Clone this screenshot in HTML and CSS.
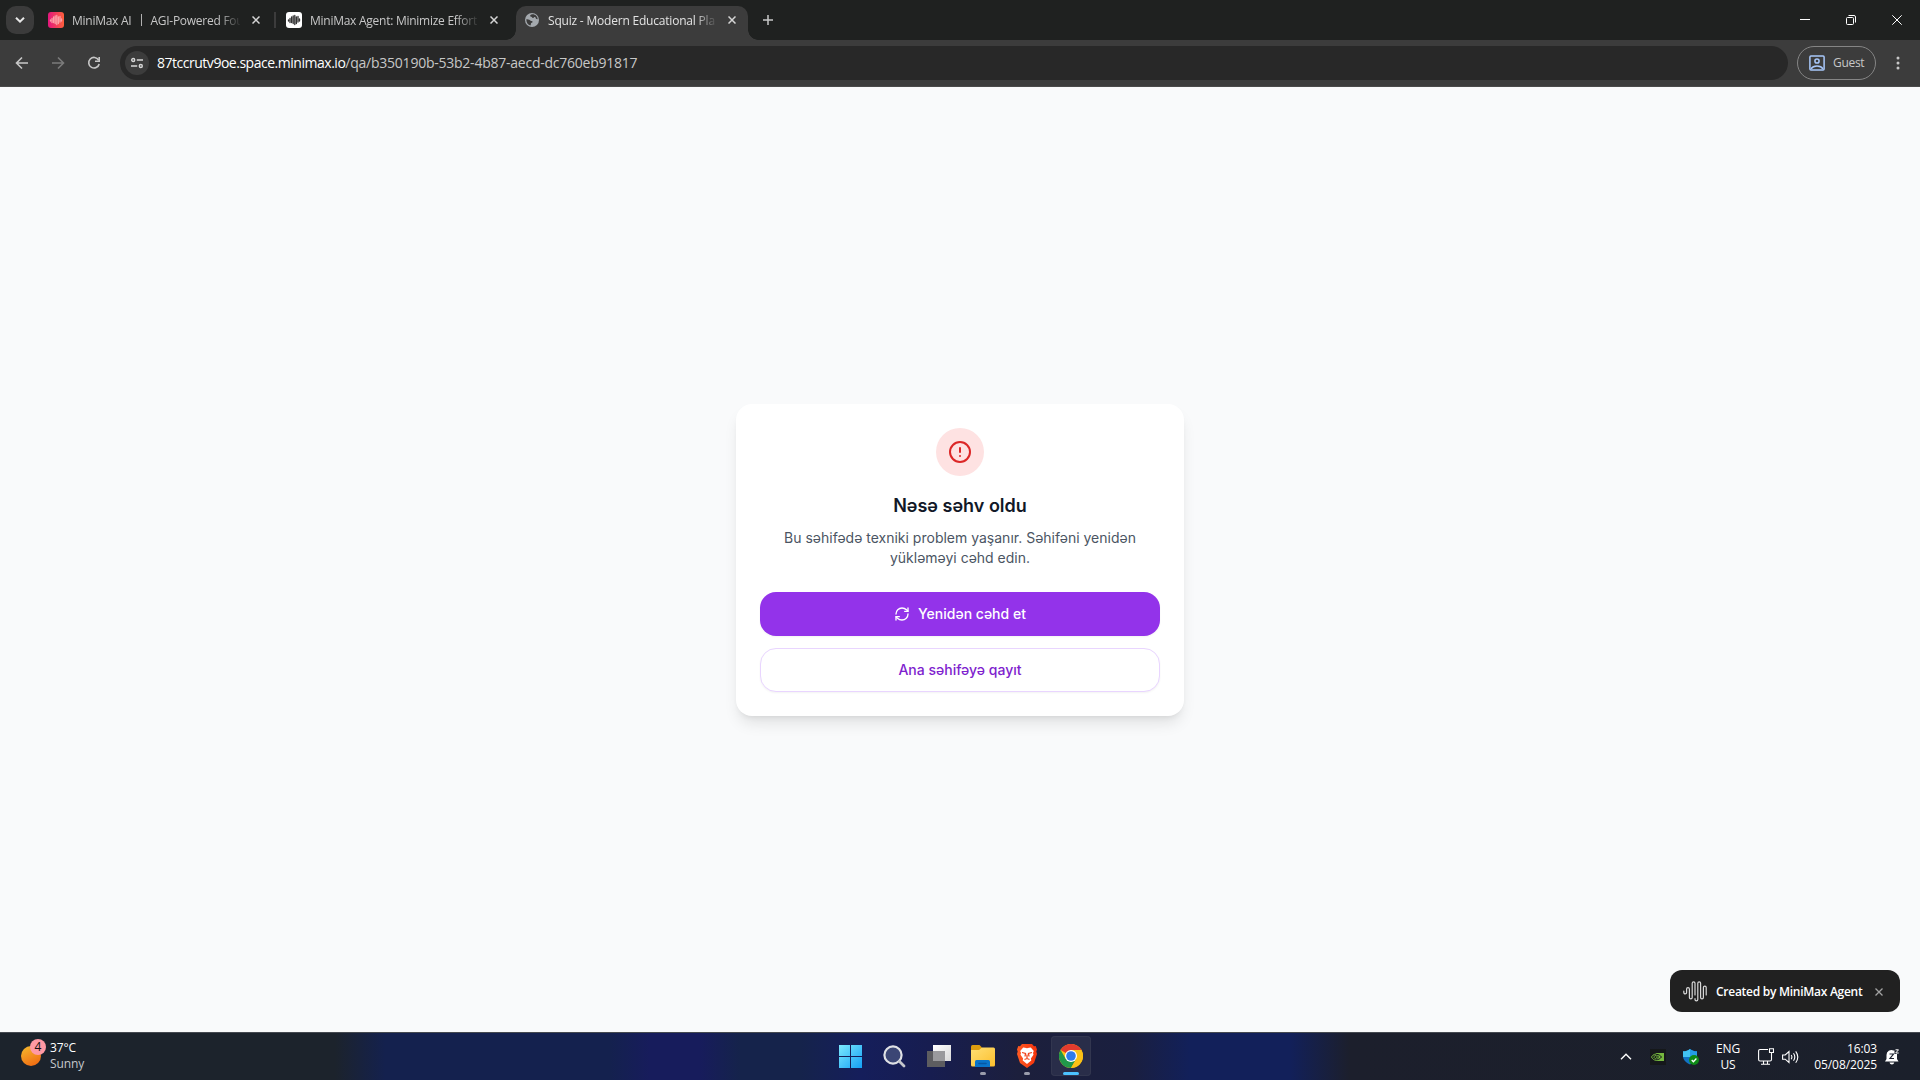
FILE: index.html
```html
<!DOCTYPE html>
<html lang="az">
<head>
<meta charset="utf-8">
<title>Squiz - Modern Educational Platform</title>
<link rel="stylesheet" href="styles.css">
</head>
<body>
<div class="screen">
  <header class="tabstrip">
    <button class="tab-search" aria-label="Search tabs"><svg width="10" height="6" viewBox="0 0 10 6" fill="none" stroke="#e8e8e8" stroke-width="2"><path d="M1 .8 5 4.600 9 .8"/></svg></button>
    <div class="tab first">
      <svg class="favicon" width="16" height="16" viewBox="0 0 16 16"><defs><linearGradient id="mm" x1="0" x2="1"><stop offset="0" stop-color="#e2167e"/><stop offset="1" stop-color="#fe603c"/></linearGradient></defs><rect width="16" height="16" rx="3" fill="url(#mm)"/><path d="M2.500 8v1M4 6.500v4M5.600 5v5.500M7.200 4v7.500M8.800 3.500v9M10.400 5v6.500M12 4.500v5.500M13.500 7v2" stroke="#fb9fa6" stroke-width="1.300" stroke-linecap="round"/></svg>
      <span class="tab-title"><span>MiniMax AI</span><span class="bar"></span><span>AGI-Powered Fou</span></span>
      <svg class="close" width="8" height="8" viewBox="0 0 8 8"><path d="M.5.5l7 7M7.500.5l-7 7"/></svg>
    </div>
    <span class="tab-sep"></span>
    <div class="tab second">
      <svg class="favicon" width="16" height="16" viewBox="0 0 16 16"><rect width="16" height="16" rx="3" fill="#fff"/><path d="M2.500 8v1M4 6.500v4M5.600 5v5.500M7.200 4v7.500M8.800 3.500v9M10.400 5v6.500M12 4.500v5.500M13.500 7v2" stroke="#333" stroke-width="1.300" stroke-linecap="round"/></svg>
      <span class="tab-title"><span>MiniMax Agent: Minimize Effort</span></span>
      <svg class="close" width="8" height="8" viewBox="0 0 8 8"><path d="M.5.5l7 7M7.500.5l-7 7"/></svg>
    </div>
    <div class="tab active">
      <svg class="globe" width="14" height="14" viewBox="0 0 14 14"><circle cx="7" cy="7" r="7" fill="#a4a9ae"/><path d="M7.500 1.300c-2 .2-2.500 1-2.300 2 .2.700 1.800.3 2 1.200.2.800 1.300.8 1.600 0 .3-.6 1-.6 1.500-.2.700.6.300 1.600 1.200 1.700l1.200.2C12.600 3.600 10.500 1.300 7.500 1.300zM1.300 6.300c.8 0 3 .1 4 1.100.9.900 2.200.3 2.300 1.400 0 1.200-1.700.7-1.700 2 0 .7-.2 1.400-.5 1.700C3 12 1.200 9.700 1.300 6.300z" fill="#3c3c3c"/></svg>
      <span class="tab-title"><span>Squiz - Modern Educational Pla</span></span>
      <svg class="close" width="8" height="8" viewBox="0 0 8 8"><path d="M.5.5l7 7M7.500.5l-7 7"/></svg>
    </div>
    <svg class="plus" width="10" height="10" viewBox="0 0 10 10"><path d="M5 0v10M0 5h10" stroke="#c7c7c7" stroke-width="1.500"/></svg>
    <div class="window-controls">
      <svg width="10" height="10" viewBox="0 0 10 10"><path d="M0 4.500h10"/></svg>
      <svg width="10" height="10" viewBox="0 0 10 10"><rect x=".5" y="2.500" width="7" height="7" rx="1"/><path d="M2.500.5H8A1.500 1.500 0 0 1 9.500 2v5.500"/></svg>
      <svg width="10" height="10" viewBox="0 0 10 10"><path d="M.3.3l9.400 9.400M9.700.3.3 9.700"/></svg>
    </div>
  </header>
  <nav class="toolbar">
    <svg class="nav-icon" width="16" height="16" viewBox="0 0 16 16"><path d="M14 8H3M8 2.500 2.500 8 8 13.500"/></svg>
    <svg class="nav-icon off" width="16" height="16" viewBox="0 0 16 16"><path d="M2 8h11M8 2.500 13.500 8 8 13.500"/></svg>
    <svg class="nav-icon" width="16" height="16" viewBox="0 0 16 16"><path d="M12.600 5A5.300 5.300 0 1 0 13.200 9"/><path d="M13.200 2v4.200H9"/></svg>
    <div class="omnibox">
      <span class="site-info"><svg width="12" height="12" viewBox="0 0 12 12" fill="none" stroke="#d6d6d6" stroke-width="1.400"><circle cx="2.200" cy="3" r="1.500"/><path d="M5.800 3H12M0 9h6.200"/><circle cx="9.800" cy="9" r="1.500"/></svg></span>
      <span class="url"><span class="host">87tccrutv9oe.space.minimax.io</span><span class="path">/qa/b350190b-53b2-4b87-aecd-dc760eb91817</span></span>
    </div>
    <button class="guest"><svg width="16" height="16" viewBox="0 0 16 16" fill="none" stroke="#a8c7fa" stroke-width="1.500"><rect x=".9" y=".9" width="14.200" height="14.200" rx="1"/><circle cx="8" cy="6" r="2.100"/><path d="M2 13.800c1.200-1.900 3.400-2.900 6-2.900s4.800 1 6 2.900"/></svg><span>Guest</span></button>
    <svg class="dots" width="4" height="14" viewBox="0 0 4 14" fill="#c7c7c7"><circle cx="2" cy="2" r="1.500"/><circle cx="2" cy="7" r="1.500"/><circle cx="2" cy="12" r="1.500"/></svg>
  </nav>
  <main class="page">
    <section class="card">
      <div class="alert-icon"><svg width="24" height="24" viewBox="0 0 24 24" fill="none" stroke="#dc2626" stroke-width="2" stroke-linecap="round"><circle cx="12" cy="12" r="10"/><path d="M12 8v4M12 16h.01"/></svg></div>
      <h1>Nəsə səhv oldu</h1>
      <p>Bu səhifədə texniki problem yaşanır. Səhifəni yenidən yükləməyi cəhd edin.</p>
      <button class="btn primary"><svg width="16" height="16" viewBox="0 0 24 24" fill="none" stroke="currentColor" stroke-width="2" stroke-linecap="round" stroke-linejoin="round"><path d="M3 12a9 9 0 0 1 9-9 9.750 9.750 0 0 1 6.740 2.740L21 8"/><path d="M21 3v5h-5"/><path d="M21 12a9 9 0 0 1-9 9 9.750 9.750 0 0 1-6.740-2.740L3 16"/><path d="M8 16H3v5"/></svg><span>Yenidən cəhd et</span></button>
      <button class="btn outline">Ana səhifəyə qayıt</button>
    </section>
    <aside class="badge">
      <svg width="25" height="21" viewBox="0 0 25 21" fill="none" stroke="#d8d8d8" stroke-width="1.200" stroke-linecap="round"><path d="M.8 10v1.500a1.400 1.400 0 0 0 2.800 0V8a1.400 1.400 0 0 1 2.800 0v8.500a1.400 1.400 0 0 0 2.800 0V2.200a1.400 1.400 0 0 1 2.800 0V14M12 17.500v1a1.400 1.400 0 0 0 2.800 0V2.200a1.400 1.400 0 0 1 2.800 0v14.300a1.400 1.400 0 0 0 2.800 0V6.500a1.400 1.400 0 0 1 2.800 0v7.500"/></svg>
      <span class="credit">Created by MiniMax Agent</span>
      <svg class="dismiss" width="8" height="8" viewBox="0 0 8 8"><path d="M.5.5l7 7M7.500.5l-7 7" stroke="#a3a3a3" stroke-width="1.300"/></svg>
    </aside>
  </main>
  <footer class="taskbar">
    <div class="weather">
      <svg width="26" height="28" viewBox="0 0 26 28"><defs><linearGradient id="sun" x1=".2" y1="0" x2=".7" y2="1"><stop offset="0" stop-color="#f5b62c"/><stop offset="1" stop-color="#f06a12"/></linearGradient></defs><circle cx="11" cy="17" r="10" fill="url(#sun)"/><circle cx="18" cy="8" r="8" fill="#ff99a4"/><text x="18" y="12" text-anchor="middle" class="count">4</text></svg>
      <div class="weather-text"><span>37°C</span><span class="cond">Sunny</span></div>
    </div>
    <div class="apps">
      <span class="app"><svg width="23" height="23" viewBox="0 0 23 23"><defs><linearGradient id="win" x1="0" y1="0" x2="1" y2="1"><stop offset="0" stop-color="#7ce9fd"/><stop offset="1" stop-color="#14a0f5"/></linearGradient></defs><path d="M0 0h11v11H0zM12 0h11v11H12zM0 12h11v11H0zM12 12h11v11H12z" fill="url(#win)"/></svg></span>
      <span class="app"><svg width="23" height="23" viewBox="0 0 23 23"><circle cx="10" cy="10" r="8.600" fill="#3b4675" stroke="#dfe1e5" stroke-width="2.200"/><path d="m16.500 16.500 4.500 4.500" stroke="#c4c7cc" stroke-width="2.800" stroke-linecap="round"/></svg></span>
      <span class="app"><svg width="24" height="22" viewBox="0 0 24 22"><defs><linearGradient id="tv" y2="1" x2="1"><stop stop-color="#fff"/><stop offset="1" stop-color="#d9d9d9"/></linearGradient></defs><path d="M0 6h18v16H0z" fill="#5d5d60"/><path d="M6 0h18v16H6z" fill="url(#tv)"/><path d="M6 6h12v10H6z" fill="#9a9a9d"/></svg></span>
      <span class="app"><svg width="24" height="22" viewBox="0 0 24 22"><defs><linearGradient id="fo" y2="1" x2="1"><stop stop-color="#ffdf74"/><stop offset="1" stop-color="#fcbf2d"/></linearGradient></defs><path d="M0 1.500Q0 0 1.500 0h7L11 2.500V6H0z" fill="#dd9c0e"/><path d="M0 5h8l3-2.500h11.500Q24 2.500 24 4v16q0 1.500-1.500 1.500h-21Q0 21.500 0 20z" fill="url(#fo)"/><path d="M4 22v-5.500Q4 15 5.500 15h12q1.500 0 1.500 1.500V22z" fill="#0a74c9"/><path d="M8 18.500h7" stroke="#0757a3" stroke-width="1.500" stroke-linecap="round"/></svg><i class="dot"></i></span>
      <span class="app"><svg width="20" height="24" viewBox="0 0 20 24"><defs><linearGradient id="br" x2="1"><stop stop-color="#ff5a22"/><stop offset="1" stop-color="#f3330c"/></linearGradient></defs><path d="M5 0h10l2 2.300 1.700-.2L20 5.500l-.7 2L20 10l-3 9-7 5-7-5-3-9 .7-2.500-.7-2 1.300-3.400L3 2.300z" fill="url(#br)"/><path d="m10 4.300 2-.6 1.800-.2 3 3.600-.8 2 .5 1.600-2.600 3.800.4 2-4.300 3.500-4.300-3.500.4-2-2.600-3.800.5-1.600-.8-2 3-3.600 1.800.2z" fill="#fff"/><path d="m5 8.500 3.500 1-.5 3M15 8.500l-3.500 1 .5 3M7.500 15.500l2.500-1 2.500 1M10 10.500v4" fill="none" stroke="#f0441c" stroke-width="1.300"/></svg><i class="dot"></i></span>
      <span class="app current"><svg width="24" height="24" viewBox="0 0 24 24"><circle cx="12" cy="12" r="12" fill="#fbc116"/><path d="M12 12 1.600 6A12 12 0 0 1 22.400 6H12z" fill="#e33b2e"/><path d="M1.600 6A12 12 0 0 0 12 24l5.200-9L12 12 6.800 15z" fill="#21984a"/><path d="M22.400 6H12v6l5.200 3L12 24A12 12 0 0 0 22.400 6z" fill="#fbc116"/><circle cx="12" cy="12" r="6" fill="#fff"/><circle cx="12" cy="12" r="4.800" fill="#2f7bea"/></svg><i class="dot"></i></span>
    </div>
    <div class="tray">
      <svg class="chev" width="12" height="7" viewBox="0 0 12 7"><path d="M1 6.200 6 1.200l5 5" stroke="#fff" stroke-width="1.400" fill="none"/></svg>
      <svg class="nv" width="16" height="16" viewBox="0 0 16 16"><path d="M0 0h16v16H0z" fill="#15181a"/><path d="M6 4h8v8H6z" fill="#76b83f"/><path d="M6 5c-2.500.2-4 2-4.500 3C2.500 10 4 11.200 6 11.300M6 6.500C4.700 6.700 4 7.500 3.700 8 4.200 9 5 9.700 6 9.800" stroke="#76b83f" fill="none"/><path d="M6 5.300c3 0 4.600 1.500 5.500 2.700C10.300 9.600 8.500 10.800 6 10.800M6 7c1.500 0 2 .5 2.500 1C8 8.800 7 9.300 6 9.300" stroke="#15181a" fill="none"/></svg>
      <svg class="shield" width="16" height="16" viewBox="0 0 16 16"><path d="M7 0c2 1.700 4 2.200 7 2.300V7c0 4-3 6.700-7 8.500C3 13.700 0 11 0 7V2.300C3 2.200 5 1.700 7 0z" fill="#1273c4"/><path d="M7 0v8H0V2.300C3 2.200 5 1.700 7 0z" fill="#42c3f2"/><path d="M7 8h7V2.300C11 2.200 9 1.700 7 0z" fill="#259ce5"/><circle cx="11" cy="11" r="5" fill="#0e8a16"/><path d="m8.700 11 1.700 1.700 3-3.200" fill="none" stroke="#fff" stroke-width="1.300"/></svg>
      <div class="lang"><span>ENG</span><span>US</span></div>
      <svg class="net" width="16" height="17" viewBox="0 0 16 17" fill="none" stroke="#fff" stroke-width="1.100"><path d="M10 1.500H2Q.6 1.500.6 3v8.500Q.6 13 2 13h10q1.500 0 1.500-1.500V6.500M5.500 13v3M9.500 13v3M3 16.200h9M11.500.8h4v3.700h-4zM13.500 4.500v4"/></svg>
      <svg class="vol" width="17" height="14" viewBox="0 0 17 14" fill="none" stroke="#fff" stroke-width="1.100"><path d="M.6 5v4.200h2.600L7 12.500V1.500L3.200 5zM9.200 5q1.400 2 0 4.200M11.500 3.300q2.600 3.700 0 7.500M13.700 1.300q4.200 5.700 0 11.500"/></svg>
      <div class="clock"><span>16:03</span><span>05/08/2025</span></div>
      <svg class="bell" width="14" height="16" viewBox="0 0 14 16"><path d="M0 12.500 1.500 10V6a5 5 0 0 1 7-4.600h1V5h2.500v5l1.500 2.500zM4.500 13.500h4.800q-.5 2-2.400 2t-2.400-2z" fill="#fff"/><path d="M4.500 5h4L5 9.500h4" stroke="#1d2330" stroke-width="1.200" fill="none"/><path d="M10.500.8h3L10.700 4h3" stroke="#fff" stroke-width="1" fill="none"/></svg>
    </div>
  </footer>
</div>
</body>
</html>
```
FILE: styles.css
```css
*{box-sizing:border-box}
body{margin:0;overflow:hidden;font-family:"Open Sans","Noto Sans",sans-serif}
button{font:inherit;padding:0;margin:0;border:0}
svg{display:block;flex:none}
.screen{width:1920px;height:1080px;display:flex;flex-direction:column;background:#3c3c3c}
.tabstrip{height:40px;flex:none;display:flex;align-items:center;background:#1f2120;padding-left:6px;font-size:12px;color:#c7c7c7}
.tab-search{width:28px;height:28px;border-radius:10px;background:#3b3b3b;display:grid;place-items:center}
.tab{display:flex;align-items:center;height:34px}
.first{margin-left:14px}
.second{margin-left:10px;margin-right:18px}
.tab-title{display:flex;align-items:center;margin-left:8px;width:168px;white-space:nowrap;letter-spacing:-.26px;-webkit-mask-image:linear-gradient(90deg,#000 146px,transparent 170px);mask-image:linear-gradient(90deg,#000 146px,transparent 170px)}
.bar{width:1px;height:12px;background:#b0b0b0;margin:0 8px 0 10px;flex:none}
.close{margin-left:12px;fill:none;stroke:#d5d5d5;stroke-width:1.500}
.tab-sep{width:2px;height:16px;background:#3c3c3c;margin-left:14px}
.active{align-self:flex-end;position:relative;width:232px;background:#3c3c3c;border-radius:10px 10px 0 0;padding:0 0 6px 9px;color:#e3e3e3}
.active .tab-title{width:168px;margin-left:9px;letter-spacing:-.2px}
.active::before,.active::after{content:"";position:absolute;bottom:0;width:10px;height:10px}
.active::before{left:-10px;background:radial-gradient(circle at 0 0,transparent 9.500px,#3c3c3c 10px)}
.active::after{right:-10px;background:radial-gradient(circle at 100% 0,transparent 9.500px,#3c3c3c 10px)}
.plus{margin-left:15px}
.window-controls{margin-left:auto;display:flex;gap:36px;padding-right:18px;fill:none;stroke:#fff}
.toolbar{height:47px;flex:none;display:flex;align-items:center;background:linear-gradient(#3c3c3c,#3c3c3c);padding:0 0 1px 14px;box-shadow:inset 0 -1px #4a4a4a}
.nav-icon{margin-right:20px;fill:none;stroke:#c7c7c7;stroke-width:1.600}
.nav-icon.off{stroke:#7b7b7b}
.omnibox{width:1668px;height:34px;border-radius:17px;background:#282828;display:flex;align-items:center;padding-left:5px;margin-left:-2px}
.site-info{width:24px;height:24px;border-radius:50%;background:#3c3c3c;display:grid;place-items:center}
.url{margin-left:8px;padding-bottom:1px;font-size:14px;white-space:nowrap;color:#c7c7c7}
.host{color:#fff;letter-spacing:-.48px}
.path{letter-spacing:-.24px}
.guest{width:79px;height:34px;margin-left:9px;border:1px solid #858585;border-radius:17px;background:none;color:#c7c7c7;font-size:12px;letter-spacing:-.3px;display:flex;align-items:center;gap:8px;padding-left:11px}
.guest span{padding-bottom:1px}
.dots{margin-left:20px}
.page{flex:1;min-height:0;background:#f9fafb;display:grid;place-items:center;position:relative;font-family:Inter,sans-serif}
.card{width:448px;height:312px;padding:24px;border-radius:16px;background:#fff;box-shadow:0 10px 15px -3px rgba(0,0,0,.1),0 4px 6px -4px rgba(0,0,0,.1);text-align:center}
.alert-icon{width:48px;height:48px;border-radius:50%;background:#fee2e2;display:grid;place-items:center;margin:0 auto 16px}
h1{margin:0 0 8px;font-size:18px;line-height:28px;font-weight:600;color:#111827}
p{margin:0 0 24px;padding:0 16px;font-size:14px;line-height:20px;color:#4b5563}
.btn{width:100%;height:44px;border-radius:16px;font-size:14px;font-weight:500;display:flex;align-items:center;justify-content:center;gap:8px;box-shadow:0 1px 2px rgba(0,0,0,.05)}
.primary{background:#9333ea;color:#fff;margin-bottom:12px}
.outline{background:#fff;border:1px solid #e9d5ff;color:#7e22ce}
.badge{position:absolute;right:20px;bottom:20px;width:230px;height:42px;border-radius:12px;background:#212121;color:#fff;font:600 12px "Open Sans",sans-serif;display:flex;align-items:center;padding-left:13px;white-space:nowrap}
.credit{margin-left:8px;letter-spacing:-.27px}
.dismiss{margin:2px 0 0 13px}
.taskbar{height:48px;flex:none;display:grid;grid-template-columns:1fr auto 1fr;align-items:center;border-top:1px solid #454950;color:#fff;font-size:12px;line-height:16px;background:linear-gradient(90deg,#1c232c 0,#1c232c 335px,#14214e 385px,#14214e 610px,#171c5c 650px,#171c5c 700px,#15234b 740px,#15234b 800px,#151e5b 860px,#171d50 930px,#1c1f3c 1020px,#1a1f3f 1130px,#12205a 1190px,#12205a 1290px,#1c1f2c 1350px,#1b202b 100%)}
.weather{display:flex;align-items:center;padding:0 0 2px 20px;gap:4px}
.weather svg{margin-top:-6px}
.count{font-size:12px;fill:#111}
.weather-text,.lang,.clock{display:flex;flex-direction:column;letter-spacing:-.1px}
.cond{color:#c5c8cc}
.apps{display:flex;gap:4px;padding:0 0 1px 1px}
.app{width:40px;height:40px;display:grid;place-items:center;position:relative;border-radius:4px}
.current{background:#292d49;box-shadow:inset 0 0 0 1px #32364f}
.dot{position:absolute;bottom:1px;left:17px;width:6px;height:3px;border-radius:2px;background:#9a9cab}
.current .dot{left:12px;width:16px;background:#4cc2ff}
.tray{display:flex;align-items:center;justify-content:flex-end;padding:0 21px 0 0}
.nv{margin-left:18px}
.shield{margin-left:17px}
.lang{margin-left:16px;width:26px;align-items:center}
.net{margin-left:17px}
.vol{margin-left:8px}
.clock{width:62px;margin-left:16px;align-items:flex-end;white-space:nowrap}
.bell{margin-left:8px}
```
